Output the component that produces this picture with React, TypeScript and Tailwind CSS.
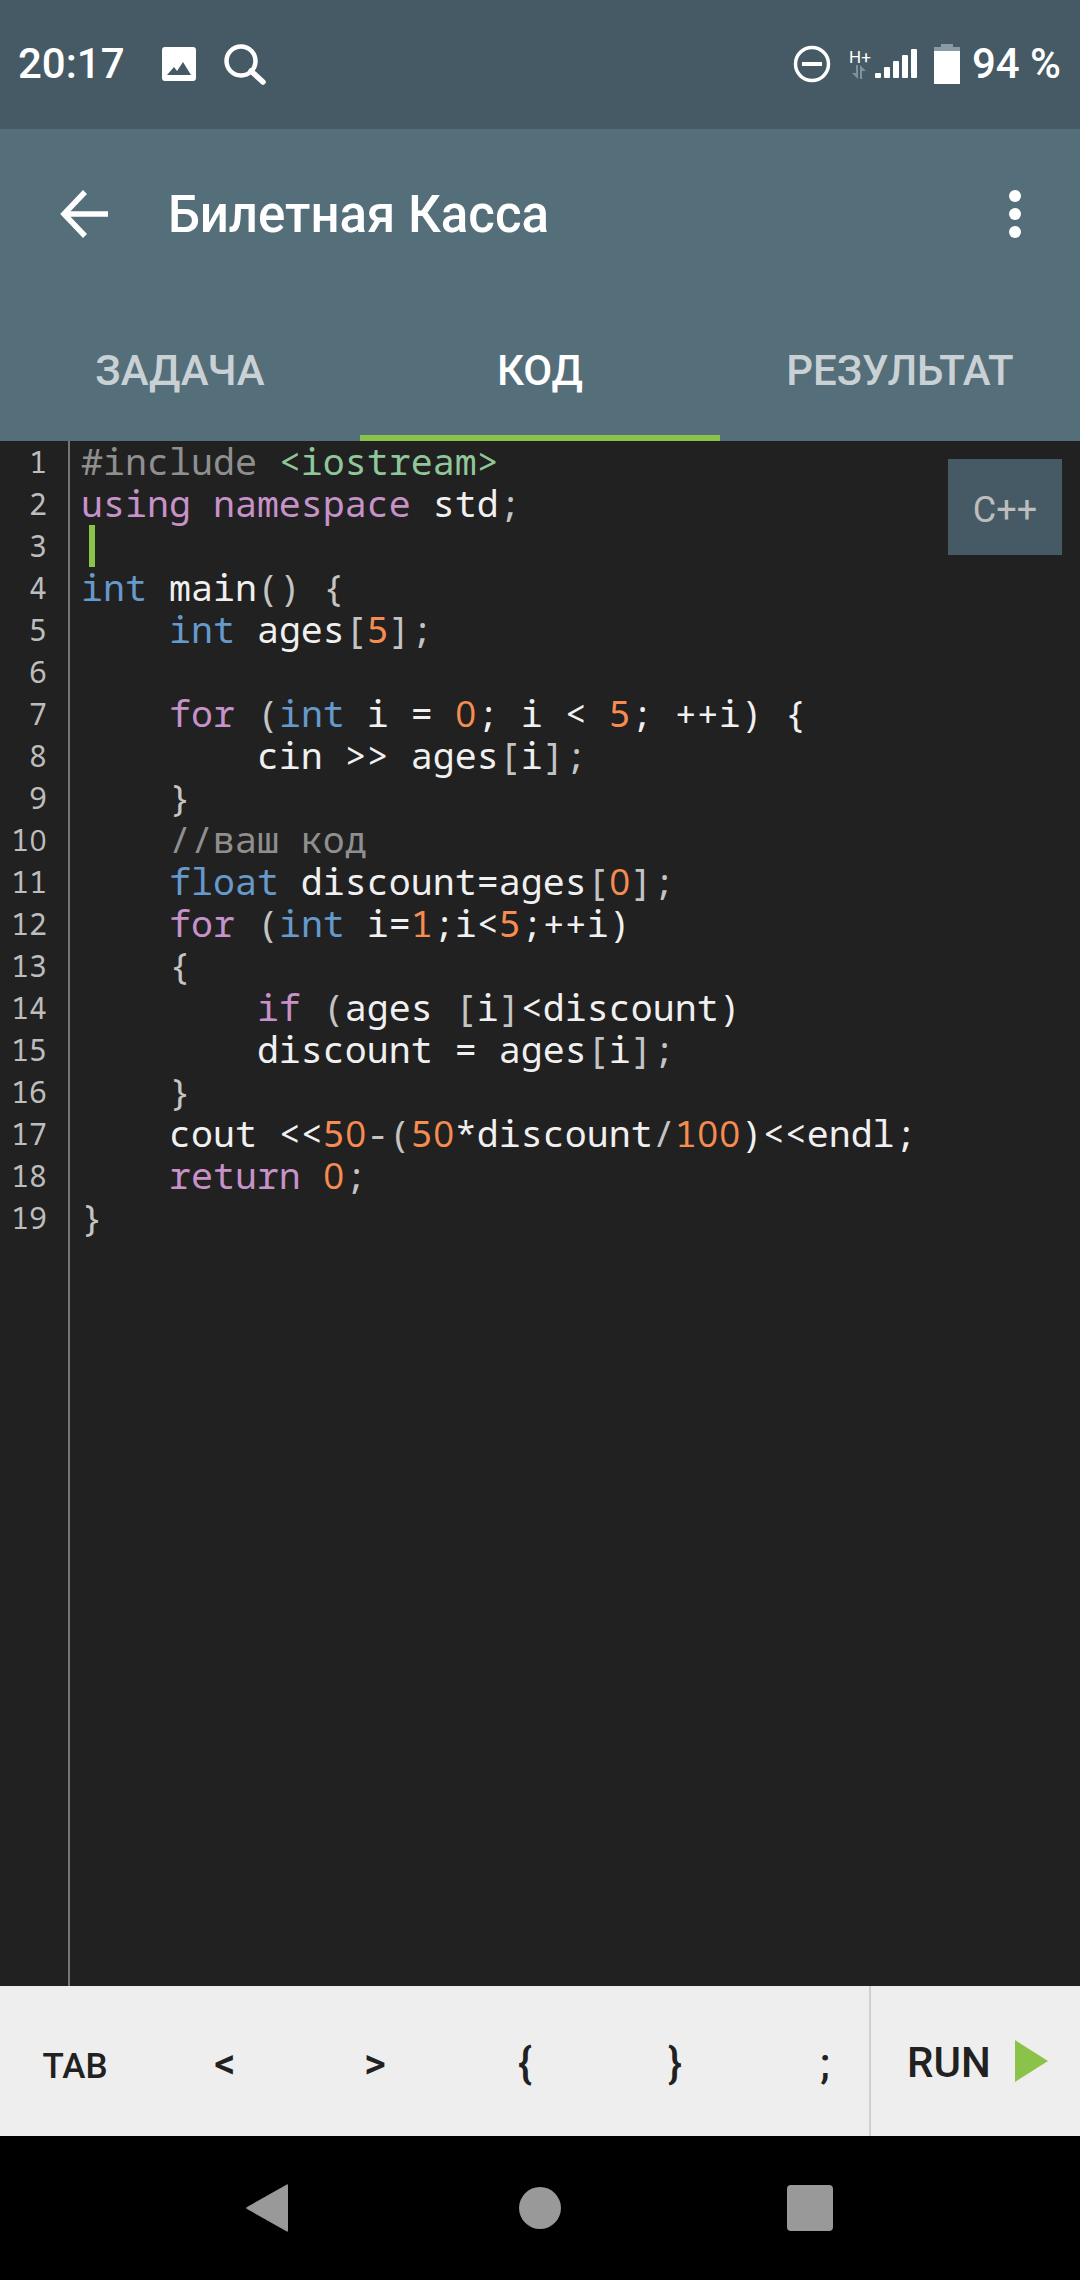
type Token = [string, string];

const KW = "text-[#c792c9]";
const TY = "text-[#6699cc]";
const NUM = "text-[#f78c51]";
const STR = "text-[#8fc79a]";
const COM = "text-[#8f8f8f]";
const TXT = "text-[#f0f0f0]";
const PUN = "text-[#c4c4c4]";

const codeLines: Token[][] = [
  [["#include ", COM], ["<iostream>", STR]],
  [["using namespace ", KW], ["std", TXT], [";", PUN]],
  [],
  [["int ", TY], ["main", TXT], ["() {", PUN]],
  [["    int ", TY], ["ages", TXT], ["[", PUN], ["5", NUM], ["];", PUN]],
  [],
  [["    for ", KW], ["(", PUN], ["int ", TY], ["i = ", TXT], ["0", NUM], ["; i < ", TXT], ["5", NUM], ["; ++i) {", TXT]],
  [["        cin >> ages", TXT], ["[", PUN], ["i", TXT], ["];", PUN]],
  [["    }", PUN]],
  [["    //ваш код", COM]],
  [["    float ", TY], ["discount=ages", TXT], ["[", PUN], ["0", NUM], ["];", PUN]],
  [["    for ", KW], ["(", PUN], ["int ", TY], ["i=", TXT], ["1", NUM], [";i<", TXT], ["5", NUM], [";++i)", TXT]],
  [["    {", PUN]],
  [["        if ", KW], ["(", PUN], ["ages ", TXT], ["[", PUN], ["i", TXT], ["]", PUN], ["<discount)", TXT]],
  [["        discount = ages", TXT], ["[", PUN], ["i", TXT], ["];", PUN]],
  [["    }", PUN]],
  [["    cout <<", TXT], ["50", NUM], ["-(", PUN], ["50", NUM], ["*discount", TXT], ["/", PUN], ["100", NUM], [")<<endl;", TXT]],
  [["    return ", KW], ["0", NUM], [";", PUN]],
  [["}", PUN]],
];

const keys = ["<", ">", "{", "}", ";"];

// the mono font slashes its zero, the editor's doesn't
const Digits = ({ text, zeroWidth }: { text: string; zeroWidth: string }) => (
  <>
    {text.split("").map((c, i) =>
      c === "0" ? (
        <span key={i} className={`inline-block text-center font-['Open_Sans',sans-serif] ${zeroWidth}`}>
          0
        </span>
      ) : (
        <span key={i}>{c}</span>
      ),
    )}
  </>
);

const StatusBar = () => (
  <div className="h-[129px] bg-[#455a64] flex items-center pl-[18px] pr-[19px] pb-[1px] text-white font-['Roboto',sans-serif]">
    <span className="text-[42px] font-medium leading-none w-[106px]">20:17</span>
    <svg viewBox="0 0 34 34" className="w-[34px] h-[34px] ml-[38px]">
      <path
        fillRule="evenodd"
        d="M3 0h28a3 3 0 0 1 3 3v28a3 3 0 0 1-3 3H3a3 3 0 0 1-3-3V3a3 3 0 0 1 3-3zM5 28h24l-8-13-6 9-3-4z"
        fill="#fff"
      />
    </svg>
    <svg viewBox="0 0 42 41" className="w-[42px] h-[41px] ml-[28px]" fill="none" stroke="#fff">
      <circle cx="17" cy="17" r="14.5" strokeWidth="4.5" />
      <path d="M27 27l12 11" strokeWidth="5.5" strokeLinecap="round" />
    </svg>
    <div className="flex-1" />
    <svg viewBox="0 0 38 38" className="w-[38px] h-[38px]">
      <circle cx="19" cy="19" r="16.5" fill="none" stroke="#fff" strokeWidth="3.5" />
      <rect x="9" y="17" width="20" height="4" fill="#fff" />
    </svg>
    <svg viewBox="0 0 68 34" className="w-[68px] h-[34px] ml-[18px]">
      <text x="0" y="16" fontSize="17" fill="#fff" fontFamily="Roboto">H+</text>
      <path d="M9 18v14L3 26h4v-8zM11 18l6 6h-4v8h-2z" fill="#7f929b" />
      <rect x="26" y="26" width="6" height="5" rx="1" fill="#fff" />
      <rect x="35" y="20" width="6" height="11" rx="1" fill="#fff" />
      <rect x="44" y="14" width="6" height="17" rx="1" fill="#fff" />
      <rect x="53" y="8" width="6" height="23" rx="1" fill="#fff" />
      <rect x="62" y="2" width="6" height="29" rx="1" fill="#fff" />
    </svg>
    <svg viewBox="0 0 26 40" className="w-[26px] h-[40px] ml-[17px]">
      <path d="M7 0h12v3h7v4H0V3h7z" fill="#8a9ba3" />
      <rect x="0" y="7" width="26" height="33" fill="#fff" />
    </svg>
    <span className="text-[42px] font-medium leading-none ml-[12px] whitespace-pre">94 %</span>
  </div>
);

const AppHeader = () => (
  <div className="h-[312px] bg-[#546e7a] flex flex-col font-['Roboto',sans-serif]">
    <div className="h-[168px] flex items-center pl-[60px] pr-[59px] text-white pt-[1px]">
      <svg viewBox="0 0 48 48" className="w-[48px] h-[48px]" fill="none" stroke="#fff" strokeWidth="5.5">
        <path d="M48 24H5M25 2L4 24l21 22" />
      </svg>
      <span className="ml-[60px] text-[51px] font-medium leading-none flex-1 pt-[2px]">Билетная Касса</span>
      <div className="flex flex-col gap-[6px]">
        <div className="w-[12px] h-[12px] rounded-full bg-white" />
        <div className="w-[12px] h-[12px] rounded-full bg-white" />
        <div className="w-[12px] h-[12px] rounded-full bg-white" />
      </div>
    </div>
    <div className="flex flex-1 text-[42px] font-medium">
      <div className="w-[360px] flex items-center justify-center text-white/70 pt-[3px]">ЗАДАЧА</div>
      <div className="w-[360px] flex items-center justify-center text-white pt-[9px] border-b-[6px] border-[#8bc34a]">КОД</div>
      <div className="w-[360px] flex items-center justify-center text-white/70 pt-[3px]">РЕЗУЛЬТАТ</div>
    </div>
  </div>
);

const CodeEditor = () => (
  <div className="relative flex-1 bg-[#212121] flex font-['Noto_Sans_Mono','DejaVu_Sans_Mono',monospace] leading-[42px]">
    <div className="w-[70px] border-r-[2px] border-[#757575] pr-[21px] text-right text-[30px] text-[#bdbdbd]">
      {codeLines.map((_, i) => (
        <div key={i} className="h-[42px]">
          <Digits text={String(i + 1)} zeroWidth="w-[18px]" />
        </div>
      ))}
    </div>
    <div className="pl-[11px] -mt-[1px] text-[36.65px]">
      {codeLines.map((line, i) => (
        <div key={i} className="h-[42px] whitespace-pre">
          {line.map(([text, color], j) => (
            <span key={j} className={color}>
              {color === NUM ? <Digits text={text} zeroWidth="w-[22px]" /> : text}
            </span>
          ))}
        </div>
      ))}
    </div>
    <div className="absolute left-[89px] top-[84px] w-[6px] h-[42px] bg-[#8bc34a]" />
    <div className="absolute left-[948px] top-[18px] w-[114px] h-[96px] bg-[#455a64] flex items-center justify-center pt-[5px] text-[#bdbdbd] text-[36px] font-['Roboto',sans-serif]">
      C++
    </div>
  </div>
);

const KeyBar = () => (
  <div className="h-[150px] bg-[#eeeeee] flex text-[#212121] font-['Roboto',sans-serif]">
    <div className="w-[871px] flex overflow-hidden border-r-[2px] border-[#cfcfcf]">
      <div className="w-[150px] shrink-0 flex items-center justify-center text-[35px] font-medium pt-[13px]">TAB</div>
      {keys.map((k) => (
        <div key={k} className="w-[150px] shrink-0 flex items-center justify-center text-[42px] font-medium pt-[5px]">
          {k}
        </div>
      ))}
    </div>
    <div className="flex-1 flex items-center pl-[36px]">
      <span className="text-[42px] font-medium leading-none mt-[3px]">RUN</span>
      <svg viewBox="0 0 33 42" className="w-[33px] h-[42px] ml-[24px]">
        <path d="M0 0l33 21L0 42z" fill="#8bc34a" />
      </svg>
    </div>
  </div>
);

const NavBar = () => (
  <div className="h-[144px] bg-black flex items-center">
    <svg viewBox="0 0 42 48" className="w-[42px] h-[48px] ml-[246px]">
      <path d="M42 2v44c0 2-1 2-2 1L1 25c-1-1-1-1 0-2L40 1c1-1 2-1 2 1z" fill="#999999" />
    </svg>
    <div className="w-[42px] h-[42px] rounded-full bg-[#999999] ml-[231px]" />
    <div className="w-[46px] h-[46px] rounded-[4px] bg-[#999999] ml-[226px]" />
  </div>
);

export default function App() {
  return (
    <div className="w-[1080px] h-[2280px] flex flex-col overflow-hidden">
      <StatusBar />
      <AppHeader />
      <CodeEditor />
      <KeyBar />
      <NavBar />
    </div>
  );
}
